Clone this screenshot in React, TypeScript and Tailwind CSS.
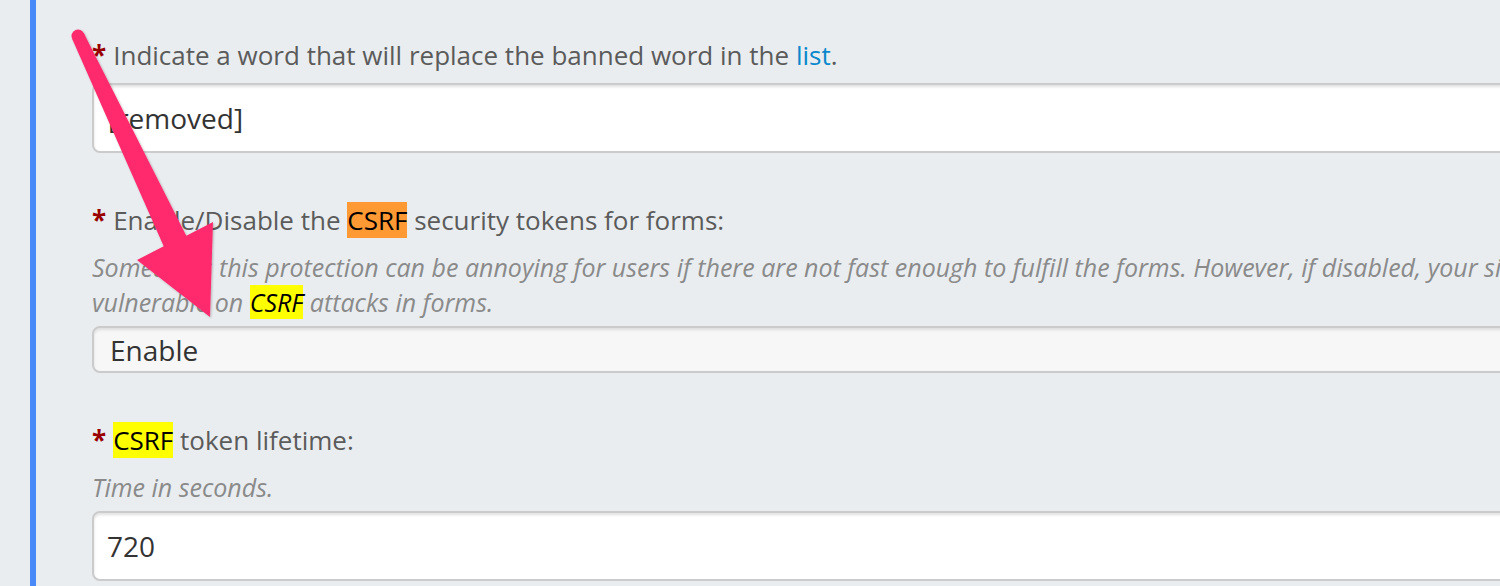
import React from "react"

const font = { fontFamily: '"Open Sans", "Noto Sans", sans-serif' }

function Req() {
  return <span className="mr-[7px] font-bold text-[#990000]">*</span>
}

function Arrow() {
  return (
    <svg className="pointer-events-none absolute left-0 top-0" width="260" height="340" viewBox="0 0 260 340">
      <defs>
        <filter id="sh" x="-20%" y="-20%" width="140%" height="140%">
          <feDropShadow dx="1" dy="1" stdDeviation="1.2" floodColor="#000" floodOpacity="0.25" />
        </filter>
      </defs>
      <g fill="#ff2b6d" filter="url(#sh)">
        <circle cx="78" cy="36" r="6.5" />
        <polygon points="83.9,33.2 186.3,235.7 213,222 210,317 137,260 163.7,246.3 72.1,38.8" />
      </g>
    </svg>
  )
}

export default function App() {
  return (
    <div className="relative h-[586px] w-[1500px] overflow-hidden bg-[#e9edf0]" style={font}>
      <div className="flex h-full">
        <div className="w-[30px] shrink-0" />
        <div className="w-[6px] shrink-0 bg-[#4a8af8]" />
        <div className="flex flex-col pl-[56px] pt-[37px]">
          <label className="h-[36px] whitespace-nowrap text-[26px] leading-[36px] text-[#5b5b5b]">
            <Req />
            Indicate a word that will replace the banned word in the{" "}
            <a className="text-[#0a88cc]">list</a>.
          </label>
          <div className="mt-[10px] flex h-[70px] w-[1500px] items-center rounded-[8px] border-2 border-[#cbcbcb] bg-white pl-[14px] text-[28px] text-[#333] shadow-[inset_0_2px_3px_rgba(0,0,0,0.12)]">
            [removed]
          </div>

          <label className="mt-[49px] h-[36px] whitespace-nowrap text-[26px] leading-[36px] text-[#5b5b5b]">
            <Req />
            Enable/Disable the <span className="bg-[#ff9933] text-black">CSRF</span> security tokens for forms:
          </label>
          <p className="mt-[12px] whitespace-nowrap text-[25px] italic leading-[35px] text-[#8a8a8a]">
            Sometimes this protection can be annoying for users if there are not fast enough to fulfill the forms. However, if disabled, your site is
            <br />
            vulnerable on <span className="bg-[#ffff00] text-black">CSRF</span> attacks in forms.
          </p>
          <div className="mt-[6px] flex h-[47px] w-[1500px] items-center rounded-[8px] border-2 border-[#cbcbcb] bg-[#f7f7f7] pl-[16px] text-[28px] text-[#333] shadow-[inset_0_2px_3px_rgba(0,0,0,0.1)]">
            Enable
          </div>

          <label className="mt-[49px] h-[36px] whitespace-nowrap text-[26px] leading-[36px] text-[#5b5b5b]">
            <Req />
            <span className="bg-[#ffff00] text-black">CSRF</span> token lifetime:
          </label>
          <p className="mt-[12px] whitespace-nowrap text-[25px] italic leading-[35px] text-[#8a8a8a]">
            Time in seconds.
          </p>
          <div className="mt-[6px] flex h-[70px] w-[1500px] items-center rounded-[8px] border-2 border-[#cbcbcb] bg-white pl-[13px] text-[28px] text-[#333] shadow-[inset_0_2px_3px_rgba(0,0,0,0.12)]">
            720
          </div>
        </div>
      </div>
      <Arrow />
    </div>
  )
}
